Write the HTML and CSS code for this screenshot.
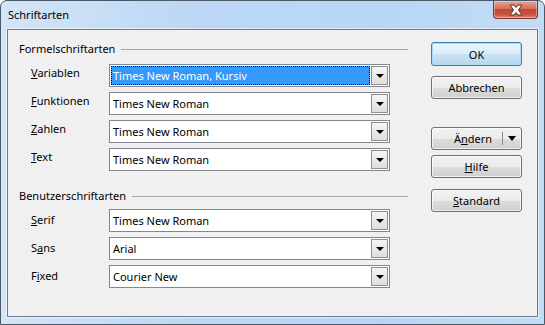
FILE: index.html
```html
<!DOCTYPE html>
<html lang="de">
<head>
    <meta charset="UTF-8">
    <title>Schriftarten</title>
    <link rel="stylesheet" href="styles.css">
</head>
<body>
    <div class="window">
        <div class="titlebar">
            <span class="title">Schriftarten</span>
            <div class="close">
                <svg width="16" height="12" viewBox="0 0 16 12">
                    <path d="M2 1 H6 L8 3.5 L10 1 H14 L10.5 6 L14 11 H10 L8 8.5 L6 11 H2 L5.5 6 Z" fill="#fff" stroke="#5a2a24" stroke-width="1" stroke-linejoin="round"/>
                </svg>
            </div>
        </div>

        <div class="client">
            <div class="groups">
                <div class="group first">
                    <div class="group-head"><span>Formelschriftarten</span></div>
                    <div class="row">
                        <label><u>V</u>ariablen</label>
                        <div class="combo selected"><span class="value"><span class="focus">Times New Roman, Kursiv</span></span><span class="drop"></span></div>
                    </div>
                    <div class="row">
                        <label><u>F</u>unktionen</label>
                        <div class="combo"><span class="value">Times New Roman</span><span class="drop"></span></div>
                    </div>
                    <div class="row">
                        <label><u>Z</u>ahlen</label>
                        <div class="combo"><span class="value">Times New Roman</span><span class="drop"></span></div>
                    </div>
                    <div class="row">
                        <label><u>T</u>ext</label>
                        <div class="combo"><span class="value">Times New Roman</span><span class="drop"></span></div>
                    </div>
                </div>

                <div class="group second">
                    <div class="group-head"><span>Benutzerschriftarten</span></div>
                    <div class="row">
                        <label><u>S</u>erif</label>
                        <div class="combo"><span class="value">Times New Roman</span><span class="drop"></span></div>
                    </div>
                    <div class="row">
                        <label>S<u>a</u>ns</label>
                        <div class="combo"><span class="value">Arial</span><span class="drop"></span></div>
                    </div>
                    <div class="row">
                        <label>F<u>i</u>xed</label>
                        <div class="combo"><span class="value">Courier New</span><span class="drop"></span></div>
                    </div>
                </div>
            </div>

            <div class="buttons">
                <button class="btn default btn-ok">OK</button>
                <button class="btn btn-cancel">Abbrechen</button>
                <button class="btn split btn-modify"><span class="split-label">Ä<u>n</u>dern</span><span class="split-arrow"></span></button>
                <button class="btn btn-help"><u>H</u>ilfe</button>
                <button class="btn btn-std"><u>S</u>tandard</button>
            </div>
        </div>
    </div>
</body>
</html>
```

FILE: styles.css
```css
body {
    margin: 0;
    background: #ffffff;
    font-family: "Noto Sans", "Open Sans", sans-serif;
    font-size: 11px;
    color: #000;
}

.window {
    width: 545px;
    height: 325px;
    box-sizing: border-box;
    border: 1px solid #4b5866;
    border-radius: 7px 7px 0 0;
    background: linear-gradient(to right, #d3e5f6 0%, #bcd8f5 35%, #b7d6f6 70%, #c3dcf3 100%);
    display: flex;
    flex-direction: column;
    overflow: hidden;
}

.titlebar {
    height: 28px;
    display: flex;
    align-items: flex-start;
    justify-content: space-between;
    flex-shrink: 0;
}

.title {
    margin: 6px 0 0 7px;
    line-height: 16px;
}

.close {
    width: 45px;
    height: 18px;
    margin-right: 6px;
    box-sizing: border-box;
    border: 1px solid #6f3a33;
    border-top: none;
    border-radius: 0 0 4px 4px;
    background: linear-gradient(to bottom, #e7a595 0%, #d66f5c 45%, #c24632 50%, #c85440 80%, #de8870 100%);
    display: flex;
    align-items: center;
    justify-content: center;
    box-shadow: inset 0 0 0 1px rgba(255, 255, 255, 0.35);
}

.client {
    margin: 0 6px 0 6px;
    height: 288px;
    box-sizing: border-box;
    border: 1px solid #6e7c8b;
    background: #f0f0f0;
    display: flex;
    box-shadow: 0 0 0 1px rgba(255, 255, 255, 0.5);
}

.groups {
    width: 400px;
    display: flex;
    flex-direction: column;
}

.group {
    display: flex;
    flex-direction: column;
    gap: 5px;
}

.group.first {
    padding-top: 11px;
}

.group.second {
    padding-top: 17px;
}

.group-head {
    height: 16px;
    line-height: 16px;
    display: flex;
    align-items: center;
    padding-left: 11px;
}

.group.first .group-head {
    margin-bottom: 2px;
}

.group-head::after {
    content: "";
    flex: 1;
    height: 0;
    border-top: 1px solid #a9a9a9;
    margin-left: 6px;
}

.row {
    display: flex;
    align-items: flex-start;
    height: 23px;
}

.row label {
    width: 78px;
    padding-left: 23px;
    line-height: 16px;
    padding-top: 1px;
}

.group.second .row label {
    padding-top: 3px;
}

.combo {
    width: 281px;
    height: 23px;
    box-sizing: border-box;
    border: 1px solid #828790;
    background: #fff;
    display: flex;
    align-items: stretch;
    padding: 1px;
}

.value {
    flex: 1;
    display: flex;
    align-items: center;
    padding-left: 2px;
    line-height: 16px;
    white-space: nowrap;
}

.combo.selected .value {
    background: #3399ff;
    color: #fff;
    padding-left: 0;
    margin-right: 1px;
}

.focus {
    flex: 1;
    align-self: stretch;
    display: flex;
    align-items: center;
    padding-left: 1px;
    border: 1px dotted #000;
}

.drop {
    width: 17px;
    box-sizing: border-box;
    border: 1px solid #8e8f8f;
    background: linear-gradient(to bottom, #f5f5f5, #dedede);
    display: flex;
    align-items: center;
    justify-content: center;
}

.drop::before {
    content: "";
    border-left: 4px solid transparent;
    border-right: 4px solid transparent;
    border-top: 4px solid #000;
}

.buttons {
    margin-left: 23px;
    padding-top: 12px;
    display: flex;
    flex-direction: column;
    width: 91px;
}

.btn {
    height: 23px;
    width: 91px;
    box-sizing: border-box;
    border: 1px solid #707070;
    border-radius: 3px;
    background: linear-gradient(to bottom, #f2f2f2 0%, #ebebeb 50%, #dddddd 51%, #cfcfcf 100%);
    font-family: inherit;
    font-size: 11px;
    color: #000;
    padding: 0;
    box-shadow: inset 0 0 0 1px rgba(255, 255, 255, 0.7);
}

.btn.default {
    height: 24px;
    border-color: #3c7fb1;
    box-shadow: inset 0 0 0 1px #a8dcf6;
    background: linear-gradient(to bottom, #eaf6fd 0%, #dcecf8 50%, #c8e2f4 51%, #b8d8f0 100%);
}

.btn-cancel {
    margin-top: 10px;
}

.btn-modify {
    margin-top: 28px;
}

.btn-help {
    margin-top: 5px;
}

.btn-std {
    margin-top: 11px;
}

.split {
    display: flex;
    align-items: stretch;
}

.split-label {
    flex: 1;
    display: flex;
    align-items: center;
    justify-content: center;
    padding-left: 12px;
}

.split-arrow {
    width: 18px;
    display: flex;
    align-items: center;
    justify-content: center;
    border-left: 1px solid #8c8c8c;
    margin: 4px 0;
}

.split-arrow::before {
    content: "";
    border-left: 4px solid transparent;
    border-right: 4px solid transparent;
    border-top: 5px solid #000;
}
```
